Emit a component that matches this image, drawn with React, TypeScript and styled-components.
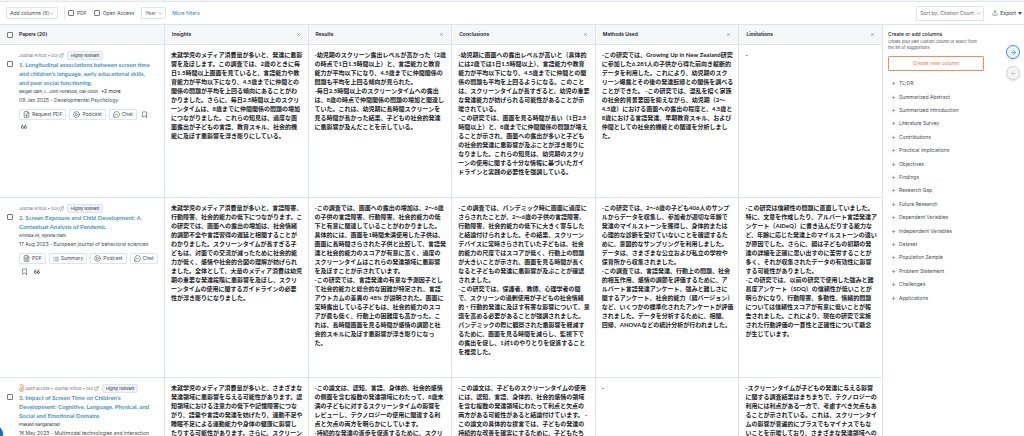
import React from "react";
import styled, { createGlobalStyle, css } from "styled-components";
import {
  ArrowLeft,
  ArrowRight,
  Bookmark,
  ChevronDown,
  CirclePlay,
  ExternalLink,
  FileDown,
  FileText,
  List,
  MessageCircleMore,
  Plus,
  Upload,
  X,
} from "lucide-react";

const c = {
  ink: "#202227",
  text: "#464a52",
  muted: "#666b73",
  line: "#dce4ed",
  head: "#f4f6f8",
  blue: "#4596c0",
  orange: "#f98a58",
};

const GlobalStyle = createGlobalStyle`
  * { box-sizing: border-box; }
  body {
    margin: 0;
    background: #fff;
    color: ${c.text};
    font-family: Inter, "Noto Sans CJK JP", sans-serif;
    font-size: 5px;
    line-height: 9px;
  }
  button, select, input { font: inherit; color: inherit; margin: 0; }
  button { cursor: pointer; white-space: nowrap; }
  svg { flex: none; display: block; }
`;

const Page = styled.div`
  position: relative;
  height: 100vh;
  display: flex;
  flex-direction: column;
  overflow: hidden;
  border-top: 1px solid #f3f4f8;
`;

const Toolbar = styled.header`
  display: flex;
  align-items: center;
  height: 23px;
  padding: 0 2px 0 6px;
  border-top: 1px solid #e3e6ee;
`;

const outline = css`
  background: #fff;
  border: 1px solid ${c.line};
  border-radius: 1px;
`;

const MenuButton = styled.button`
  ${outline}
  display: flex;
  align-items: center;
  justify-content: space-between;
  width: 52px;
  height: 12px;
  padding: 0 3px;
`;

const Divider = styled.span`
  height: 12px;
  margin: 0 3px 0 6px;
  border-left: 1px solid ${c.line};
`;

const CheckLabel = styled.label`
  display: flex;
  align-items: center;
  gap: 3px;
  margin-right: 7px;
`;

const Checkbox = styled.input.attrs({ type: "checkbox" })`
  appearance: none;
  flex: none;
  display: block;
  width: 6px;
  height: 6px;
  border: 1px solid #74787f;
  border-radius: 1px;
  background: #fff;
  &:checked { background: ${c.blue}; }
`;

const SelectWrap = styled.span<{ $w: number; $h: number }>`
  display: grid;
  align-items: center;
  width: ${(p) => p.$w}px;
  height: ${(p) => p.$h}px;
  > * { grid-area: 1 / 1; }
  > svg { justify-self: end; margin-right: 3px; pointer-events: none; }
`;

const Select = styled.select`
  ${outline}
  appearance: none;
  width: 100%;
  height: 100%;
  padding: 0 3px;
  color: ${c.muted};
`;

const MoreFilters = styled.a`
  margin-left: 6px;
  color: ${c.blue};
  font-weight: 500;
  text-decoration: none;
`;

const ToolbarEnd = styled.div`
  display: flex;
  align-items: center;
  gap: 8px;
  margin-left: auto;
`;

const ExportButton = styled.button`
  display: flex;
  align-items: center;
  gap: 2px;
  padding: 0;
  border: 0;
  background: none;
  font-weight: 500;
`;

const Body = styled.div`
  flex: 1;
  min-height: 0;
  display: flex;
`;

const TablePane = styled.main`
  flex: 1;
  min-width: 0;
  overflow: hidden;
`;

const Table = styled.table`
  width: 100%;
  table-layout: fixed;
  border-collapse: separate;
  border-spacing: 0;
`;

const HeadCell = styled.th<{ $first?: boolean }>`
  width: ${(p) => (p.$first ? "165px" : "auto")};
  height: 21px;
  padding: 0 7px;
  background: ${c.head};
  border: solid ${c.line};
  border-width: 1px 1px 1px 0;
  color: ${c.ink};
  font-weight: 600;
  text-align: left;
`;

const HeadInner = styled.div<{ $start?: boolean }>`
  display: flex;
  align-items: center;
  justify-content: ${(p) => (p.$start ? "flex-start" : "space-between")};
  gap: 6px;
`;

const CloseButton = styled.button`
  padding: 0;
  border: 0;
  background: none;
  color: ${c.muted};
`;

const Row = styled.tr<{ $h: number }>`
  height: ${(p) => p.$h}px;
`;

const Cell = styled.td`
  padding: 5px 2px 5px 6px;
  border: solid ${c.line};
  border-width: 0 1px 1px 0;
  vertical-align: top;
  color: ${c.ink};
  font-family: Lato, "Noto Sans CJK JP", sans-serif;
  font-size: 6px;
  font-weight: 700;
  line-height: 9px;
  white-space: pre-line;
`;

const PaperCell = styled(Cell)`
  padding: 5px 6px;
  color: ${c.text};
  font-family: inherit;
  font-weight: 400;
  white-space: normal;
`;

const PaperGrid = styled.div`
  display: grid;
  grid-template-columns: 6px 1fr;
  column-gap: 6px;
  padding-left: 1px;
  > input { margin-top: 11px; }
`;

const Meta = styled.div`
  display: flex;
  align-items: center;
  gap: 1px;
  height: 10px;
  color: ${c.muted};
  font-size: 4px;
`;

const Badge = styled.span`
  margin-left: 2px;
  padding: 0 3px;
  border: 1px solid #dfe5ee;
  border-radius: 2px;
  background: #eff3f8;
  color: ${c.ink};
  line-height: 7px;
`;

const Title = styled.a`
  display: block;
  color: ${c.blue};
  font-family: Lato, sans-serif;
  font-size: 6px;
  font-weight: 700;
  line-height: 9px;
  text-decoration: none;
  white-space: pre;
`;

const Authors = styled.div`
  display: flex;
  gap: 3px;
  color: ${c.ink};
  font-size: 4px;
  line-height: 9px;
`;

const More = styled.span`
  font-size: 5px;
`;

const DateLine = styled.div`
  font-size: 5px;
  line-height: 9px;
`;

const Actions = styled.div`
  display: flex;
  flex-wrap: wrap;
  align-items: center;
  gap: 4px 3px;
  margin-top: 4px;
`;

const ActionButton = styled.button`
  ${outline}
  display: flex;
  align-items: center;
  gap: 2px;
  height: 11px;
  padding: 0 3px;
  font-size: 5px;
`;

const IconButton = styled.button`
  display: flex;
  justify-content: center;
  width: 10px;
  padding: 0;
  border: 0;
  background: none;
  color: ${c.text};
`;

const Sidebar = styled.aside`
  flex: 0 0 141px;
  display: flex;
  justify-content: space-between;
  padding: 6px 4px 0 5px;
  border-top: 1px solid ${c.line};
`;

const Suggestions = styled.section`
  width: 96px;
`;

const SideTitle = styled.h2`
  margin: 0;
  color: ${c.ink};
  font-size: 5px;
  font-weight: 500;
  line-height: 7px;
`;

const SideText = styled.p`
  margin: 1px 0 5px;
  padding-right: 4px;
  font-size: 4px;
  line-height: 6px;
`;

const CreateButton = styled.button`
  width: 100%;
  height: 15px;
  border: 1px solid ${c.orange};
  border-radius: 1px;
  background: #fff;
  color: ${c.orange};
  font-weight: 500;
`;

const SuggestionList = styled.ul`
  display: flex;
  flex-direction: column;
  height: 228px;
  margin: 6px 0 0;
  padding: 0 0 0 3px;
  list-style: none;
`;

const SuggestionItem = styled.li`
  flex: 1;
  display: flex;
  align-items: center;
`;

const AddButton = styled.button`
  display: flex;
  align-items: center;
  gap: 3px;
  padding: 0;
  border: 0;
  background: none;
`;

const NavButtons = styled.nav`
  display: flex;
  flex-direction: column;
  gap: 7px;
  margin-top: 14px;
`;

const RoundButton = styled.button<{ $active?: boolean }>`
  display: grid;
  place-items: center;
  width: 14px;
  height: 14px;
  padding: 0;
  border: 1px solid ${(p) => (p.$active ? c.blue : "#d3d5d8")};
  border-radius: 50%;
  background: ${(p) => (p.$active ? "#eaf4fa" : "#f4f4f5")};
  color: ${(p) => (p.$active ? "#2f82b0" : "#b9bcc0")};
  box-shadow: 0 1px 2px #00000022;
`;

const HelpBubble = styled.button`
  position: absolute;
  left: -15px;
  bottom: -7px;
  width: 18px;
  height: 18px;
  padding: 0;
  border: 0;
  border-radius: 50%;
  background: #1f6fae;
  box-shadow: 0 1px 3px #00000040;
`;

type Action = "request" | "pdf" | "summary" | "podcast" | "chat";

const actionParts: Record<Action, [React.ReactNode, string]> = {
  request: [<FileDown size={7} key="i" />, "Request PDF"],
  pdf: [<FileText size={7} key="i" />, "PDF"],
  summary: [<List size={6} key="i" />, "Summary"],
  podcast: [<CirclePlay size={7} key="i" />, "Podcast"],
  chat: [<MessageCircleMore size={7} key="i" />, "Chat"],
};

interface Paper {
  height: number;
  open?: boolean;
  title: string;
  authors: string;
  more?: string;
  date: string;
  actions: Action[];
  cells: string[];
}

const columns = ["Insights", "Results", "Conclusions", "Methods Used", "Limitations"];

const papers: Paper[] = [
  {
    height: 153,
    title: "1. Longitudinal associations between screen time\nand children's language, early educational skills,\nand peer social functioning.",
    authors: "Megan Gath, L. John Horwood, Gail Gillon",
    more: "+2 more",
    date: "09 Jan 2025 - Developmental Psychology",
    actions: ["request", "podcast", "chat"],
    cells: [
      `未就学児のメディア消費量が多いと、発達に悪影
響を及ぼします。この調査では、2歳のときに毎
日1.5時間以上画面を見ていると、言語能力や教
育能力が平均以下になり、4.5歳までに仲間との
関係の問題が平均を上回る傾向にあることがわ
かりました。さらに、毎日2.5時間以上のスクリ
ーンタイムは、8歳までに仲間関係の問題の増加
につながりました。これらの知見は、過度な画
面露出が子どもの言語、教育スキル、社会的機
能に及ぼす悪影響を浮き彫りにしている。`,
      `-幼児期のスクリーン露出レベルが高かった（2歳
の時点で1日1.5時間以上）と、言語能力と教育
能力が平均以下になり、4.5歳までに仲間関係の
問題も平均を上回る傾向が見られた。
-毎日2.5時間以上のスクリーンタイムへの露出
は、8歳の時点で仲間関係の問題の増加と関連し
ていた。これは、幼児期に長時間スクリーンを
見る時間が長かった結果、子どもの社会的発達
に悪影響が及んだことを示している。`,
      `-幼児期に画面への露出レベルが高いと（具体的
には2歳では1日1.5時間以上）、言語能力や教育
能力が平均以下になり、4.5歳までに仲間との関
係の問題も平均を上回るようになる。このこと
は、スクリーンタイムが長すぎると、幼児の重要
な発達能力が妨げられる可能性があることが示
唆されている。
-この研究では、画面を見る時間が長い（1日2.5
時間以上）と、8歳までに仲間関係の問題が増え
ることが示され、画面への露出が多いと子ども
の社会的発達に悪影響が及ぶことが浮き彫りに
なりました。これらの知見は、幼児期のスクリ
ーンの使用に関する十分な情報に基づいたガイ
ドラインと実践の必要性を強調している。`,
      `-この研究では、Growing Up in New Zealand研究
に参加した6,281人の子供から得た前向き縦断的
データを利用した。これにより、幼児期のスク
リーン曝露とその後の発達転帰との関係を調べる
ことができた。 -この研究では、混乱を招く家族
の社会的背景要因を抑えながら、幼児期（2〜
4.5歳）における画面への露出の程度と、4.5歳と
8歳における言語発達、早期教育スキル、および
仲間としての社会的機能との関連を分析しまし
た。`,
      "-",
    ],
  },
  {
    height: 180,
    title: "2. Screen Exposure and Child Development: A\nContextual Analysis of Pandemic",
    authors: "Arishba Ali, Ayesha Inam",
    date: "17 Aug 2023 - European journal of behavioral sciences",
    actions: ["pdf", "summary", "podcast", "chat"],
    cells: [
      `未就学児のメディア消費量が多いと、言語障害、
行動障害、社会的能力の低下につながります。こ
の研究では、画面への露出の増加は、社会情緒
的調節不全や言語習得の遅延と相関することが
わかりました。スクリーンタイムが長すぎる子
どもは、対面での交流が減ったために社会的能
力が低く、感情や社会的合図の理解が妨げられ
ました。全体として、大量のメディア消費は幼児
期の重要な発達段階に悪影響を及ぼし、スクリ
ーンタイムの使用に関するガイドラインの必要
性が浮き彫りになりました。`,
      `-この調査では、画面への露出の増加は、2〜6歳
の子供の言語障害、行動障害、社会的能力の低
下と有意に関連していることがわかりました。
具体的には、画面を1時間未満使用した子供は、
画面に長時間さらされた子供と比較して、言語発
達と社会的能力のスコアが有意に高く、過度の
スクリーンタイムはこれらの発達領域に悪影響
を及ぼすことが示されています。
-この研究では、言語発達の有意な予測因子とし
て社会的能力と総合的な困難が特定され、言語
アウトカムの差異の 48% が説明された。画面に
常時露出している子どもは、社会的能力のスコ
アが最も低く、行動上の困難度も高かった。こ
れは、長時間画面を見る時間が感情の調節と社
会的スキルに及ぼす悪影響が浮き彫りになっ
た。`,
      `-この調査では、パンデミック時に画面に過度に
さらされたことが、2〜6歳の子供の言語障害、
行動障害、社会的能力の低下に大きく寄与した
と結論付けられました。その結果、スクリーン
デバイスに常時さらされていた子どもは、社会
的能力の尺度ではスコアが低く、行動上の問題
が大きいことが示され、画面を見る時間が長く
なると子どもの発達に悪影響が及ぶことが確認
されました。
-この研究では、保護者、教師、心理学者の間
で、スクリーンの過剰使用が子どもの社会情緒
的・行動的発達に及ぼす有害な影響について、意
識を高める必要があることが強調されました。
パンデミックの際に観察された悪影響を軽減す
るために、画面を見る時間を減らし、監視下で
の露出を促し、1対1のやりとりを促進すること
を推奨した。`,
      `-この研究では、2〜6歳の子ども406人のサンプ
ルからデータを収集し、参加者が適切な年齢で
発達のマイルストーンを獲得し、身体的または
心理的な診断を受けていないことを確認するた
めに、意図的なサンプリングを利用しました。
データは、さまざまな公立および私立の学校や
保育所から収集されました。
-この調査では、言語発達、行動上の問題、社会
的相互作用、感情の調節を評価するために、ア
ルバート言語発達アンケート、強みと難しさに
関するアンケート、社会的能力（親バージョン）
など、いくつかの標準化されたアンケートが評価
されました。データを分析するために、相関、
回帰、ANOVAなどの統計分析が行われました。`,
      `-この研究は信頼性の問題に直面していました。
特に、文章を作成したり、アルバート言語発達ア
ンケート（AIDeQ）に書き込んだりする能力な
ど、年齢に応じた発達上のマイルストーンの違い
が原因でした。さらに、親は子どもの初期の発
達の詳細を正確に思い出すのに苦労することが
多く、それが収集されたデータの有効性に影響
する可能性がありました。
-この研究では、以前の研究で使用した強みと難
易度アンケート（SDQ）の信頼性が低いことが
明らかになり、行動障害、多動性、情緒的問題
については信頼性スコアが有意に低いことが報
告されました。これにより、現在の研究で実施
された行動評価の一貫性と正確性について懸念
が生じています。`,
    ],
  },
  {
    height: 58,
    open: true,
    title: "3. Impact of Screen Time on Children's\nDevelopment: Cognitive, Language, Physical, and\nSocial and Emotional Domains",
    authors: "Prakash Ranganathan",
    date: "16 May 2023 - Multimodal technologies and interaction",
    actions: [],
    cells: [
      `未就学児のメディア消費量が多いと、さまざまな
発達領域に悪影響を与える可能性があります。認
知領域における注意力の低下や記憶障害につな
がり、語彙や言語の発達を妨げたり、運動不足や
睡眠不足による運動能力や身体の健康に影響し
たりする可能性があります。さらに、スクリーン`,
      `-この論文は、認知、言語、身体的、社会的感情
の側面を含む複数の発達領域にわたって、8歳未
満の子どもに対するスクリーンタイムの影響を
レビューし、テクノロジーの使用に関連する利
点と欠点の両方を明らかにしています。
-持続的な発達の進歩を促進するために、スクリ`,
      `-この論文は、子どものスクリーンタイムの使用
には、認知、言語、身体的、社会的感情の領域
を含む複数の発達領域にわたって利点と欠点の
両方がある可能性があると結論付けています。 -
この論文の具体的な提言では、子どもの発達の
持続的な改善を確実にするために、子どもたち`,
      "-",
      `-スクリーンタイムが子どもの発達に与える影響
に関する調査結果はまちまちで、テクノロジーの
利用には利点がある一方で、考慮すべき欠点もあ
ることが示されている。これは、スクリーンタイ
ムの影響が普遍的にプラスでもマイナスでもな
いことを示唆しており、さまざまな発達領域への`,
    ],
  },
];

const suggestions = [
  "TL;DR", "Summarized Abstract", "Summarized Introduction", "Literature Survey",
  "Contributions", "Practical Implications", "Objectives", "Findings", "Research Gap",
  "Future Research", "Dependent Variables", "Independent Variables", "Dataset",
  "Population Sample", "Problem Statement", "Challenges", "Applications",
];

function QuoteIcon() {
  return (
    <svg width="6" height="5" viewBox="0 0 12 10" fill="none" stroke="currentColor" strokeWidth="1.6">
      <circle cx="3" cy="7" r="2" />
      <path d="M1 7Q1 2 4.5 1" />
      <circle cx="9" cy="7" r="2" />
      <path d="M7 7Q7 2 10.5 1" />
    </svg>
  );
}

function OpenAccessIcon() {
  return (
    <svg width="5" height="8" viewBox="0 0 10 16" fill="none" stroke={c.orange} strokeWidth="1.8">
      <circle cx="5" cy="11" r="4" />
      <circle cx="5" cy="11" r="1" />
      <path d="M2 4V3.500a3 2.500 0 0 1 6 0V8" />
    </svg>
  );
}

function PaperSummary({ paper }: { paper: Paper }) {
  return (
    <PaperGrid>
      <Checkbox aria-label={paper.title} />
      <div>
        <Meta>
          {paper.open && (
            <>
              <OpenAccessIcon />
              <span>Open access •</span>
            </>
          )}
          <span>Journal Article • DOI</span>
          <ExternalLink size={5} />
          <Badge>Highly relevant</Badge>
        </Meta>
        <Title href="#">{paper.title}</Title>
        <Authors>
          {paper.authors}
          {paper.more && <More>{paper.more}</More>}
        </Authors>
        <DateLine>{paper.date}</DateLine>
        {paper.actions.length > 0 && (
          <Actions>
            {paper.actions.map((a) => (
              <ActionButton key={a}>
                {actionParts[a][0]}
                {actionParts[a][1]}
              </ActionButton>
            ))}
            <IconButton aria-label="Save">
              <Bookmark size={7} />
            </IconButton>
            <IconButton aria-label="Cite">
              <QuoteIcon />
            </IconButton>
          </Actions>
        )}
      </div>
    </PaperGrid>
  );
}

export default function App() {
  return (
    <>
      <GlobalStyle />
      <Page>
        <Toolbar>
          <MenuButton>
            Add columns (5) <ChevronDown size={5} />
          </MenuButton>
          <Divider />
          <CheckLabel>
            <Checkbox /> PDF
          </CheckLabel>
          <CheckLabel>
            <Checkbox /> Open Access
          </CheckLabel>
          <SelectWrap $w={25} $h={12}>
            <Select aria-label="Year">
              <option>Year</option>
            </Select>
            <ChevronDown size={5} />
          </SelectWrap>
          <MoreFilters href="#">More filters</MoreFilters>
          <ToolbarEnd>
            <SelectWrap $w={68} $h={15}>
              <Select aria-label="Sort by">
                <option>Sort by: Citation Count</option>
              </Select>
              <ChevronDown size={5} />
            </SelectWrap>
            <ExportButton>
              <Upload size={6} /> Export
              <svg width="4" height="3" viewBox="0 0 4 3">
                <path d="M0 0h4L2 3z" fill="currentColor" />
              </svg>
            </ExportButton>
          </ToolbarEnd>
        </Toolbar>
        <Body>
          <TablePane>
            <Table>
              <thead>
                <tr>
                  <HeadCell $first>
                    <HeadInner $start>
                      <Checkbox aria-label="Select all papers" /> Papers (20)
                    </HeadInner>
                  </HeadCell>
                  {columns.map((name) => (
                    <HeadCell key={name}>
                      <HeadInner>
                        {name}
                        <CloseButton aria-label={`Remove ${name}`}>
                          <X size={5} />
                        </CloseButton>
                      </HeadInner>
                    </HeadCell>
                  ))}
                </tr>
              </thead>
              <tbody>
                {papers.map((paper) => (
                  <Row key={paper.title} $h={paper.height}>
                    <PaperCell>
                      <PaperSummary paper={paper} />
                    </PaperCell>
                    {paper.cells.map((text, i) => (
                      <Cell key={columns[i]}>{text}</Cell>
                    ))}
                  </Row>
                ))}
              </tbody>
            </Table>
          </TablePane>
          <Sidebar>
            <Suggestions>
              <SideTitle>Create or add columns</SideTitle>
              <SideText>
                Create your own custom column or select from the list of suggestions
              </SideText>
              <CreateButton>Create new column</CreateButton>
              <SuggestionList>
                {suggestions.map((name) => (
                  <SuggestionItem key={name}>
                    <AddButton>
                      <Plus size={5} /> {name}
                    </AddButton>
                  </SuggestionItem>
                ))}
              </SuggestionList>
            </Suggestions>
            <NavButtons aria-label="Scroll columns">
              <RoundButton $active aria-label="Next columns">
                <ArrowRight size={7} />
              </RoundButton>
              <RoundButton aria-label="Previous columns">
                <ArrowLeft size={7} />
              </RoundButton>
            </NavButtons>
          </Sidebar>
        </Body>
        <HelpBubble aria-label="Help" />
      </Page>
    </>
  );
}
